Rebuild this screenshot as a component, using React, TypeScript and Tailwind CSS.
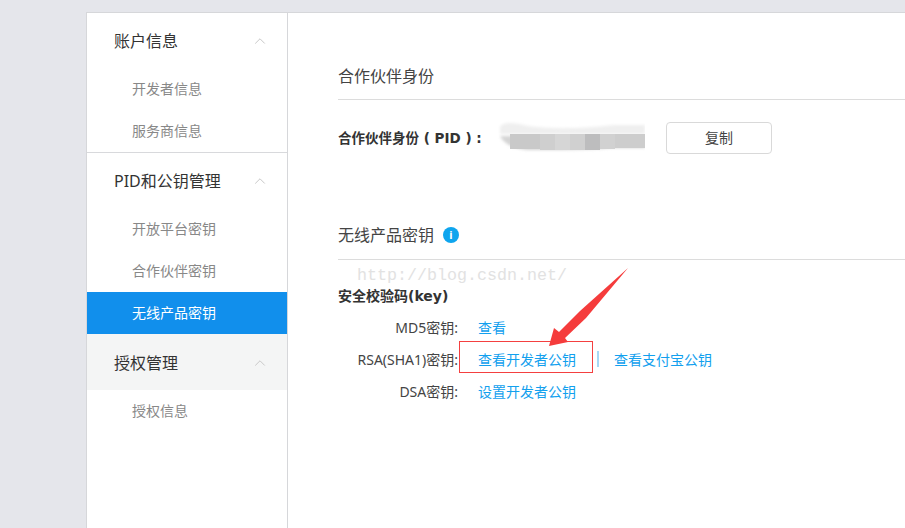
import { ChevronUp } from "lucide-react"

const groups = [
  { title: "账户信息", items: ["开发者信息", "服务商信息"] },
  { title: "PID和公钥管理", items: ["开放平台密钥", "合作伙伴密钥", "无线产品密钥"] },
  { title: "授权管理", items: ["授权信息"] },
]

function Sidebar() {
  return (
    <aside className="w-[202px] shrink-0 border-x border-[#d6d7da] bg-white">
      {groups.map((group, i) => (
        <div key={group.title} className={i === 0 ? "border-b border-[#d8d9dc]" : ""}>
          <div
            className={`flex items-center justify-between pl-[27px] pr-[18px] text-[16px] text-[#333] ${i === 2 ? "h-[56px] bg-[#f4f5f5] pt-[2px]" : "h-[55px]"}`}
          >
            <span>{group.title}</span>
            <ChevronUp className="h-[18px] w-[18px] text-[#c8c8c8]" strokeWidth={1.33} />
          </div>
          {group.items.map((item) => (
            <div
              key={item}
              className={`flex h-[42px] items-center pb-[2px] pl-[45px] text-[14px] ${item === "无线产品密钥" ? "bg-[#118fec] text-white" : "text-[#888]"}`}
            >
              {item}
            </div>
          ))}
        </div>
      ))}
    </aside>
  )
}

function Blurred() {
  return (
    <svg width="147" height="36" viewBox="0 0 147 36" className="shrink-0">
      <defs>
        <filter id="soft" x="-10%" y="-30%" width="120%" height="160%">
          <feGaussianBlur stdDeviation="1.5" />
        </filter>
      </defs>
      <path d="M2 7C6 1 16 3 30 6C60 10 90 8 116 5H147V14H2Z" fill="#efefef" filter="url(#soft)" />
      <path d="M2 16H147V28H112C90 30 60 30 30 30C16 29 6 24 2 16Z" fill="#d4d4d4" filter="url(#soft)" />
      <rect x="12" y="14" width="30" height="15" fill="#c9c9c9" />
      <rect x="42" y="14" width="15" height="16" fill="#cfcfcf" />
      <rect x="57" y="14" width="15" height="16" fill="#d6d6d6" />
      <rect x="72" y="14" width="15" height="16" fill="#d0d0d0" />
      <rect x="87" y="14" width="15" height="16" fill="#bdbdbe" />
      <rect x="102" y="14" width="15" height="15" fill="#d1d1d1" />
      <rect x="117" y="14" width="30" height="14" fill="#cdcdcd" />
    </svg>
  )
}

function KeyRow({ label, children }: { label: string; children: React.ReactNode }) {
  return (
    <div className="flex h-[32px] items-center">
      <div className="w-[120px] shrink-0 text-right text-[14px] text-[#444]">{label}</div>
      {children}
    </div>
  )
}

export default function App() {
  return (
    <div
      className="relative flex h-[528px] w-[905px] overflow-hidden bg-[#e5e6eb] pl-[86px] pt-[12px]"
      style={{ fontFamily: '"Noto Sans", "Noto Sans CJK SC", sans-serif' }}
    >
      <div className="flex min-w-0 flex-1 border-t border-[#d6d7da]">
        <Sidebar />
        <main className="flex-1 bg-white pl-[50px]">
          <h2 className="flex h-[87px] items-end border-b border-[#dcdcdc] pb-[11px] text-[16px] leading-[24px] text-[#444]">
            合作伙伴身份
          </h2>
          <div className="mt-[21px] flex h-[33px] items-center">
            <span className="w-[160px] shrink-0 whitespace-pre pt-[2px] font-['DejaVu_Sans','Noto_Sans_CJK_SC',sans-serif] text-[13.5px] font-bold text-[#333]">
              合作伙伴身份 ( PID ) :
            </span>
            <Blurred />
            <button className="ml-[21px] h-[32px] w-[106px] rounded-[4px] border border-[#d9d9d9] bg-white text-[14px] text-[#444]">
              复制
            </button>
          </div>
          <div className="mt-[53px] flex h-[53px] items-center gap-[9px] border-b border-[#dcdcdc] pt-[4px] text-[16px] text-[#444]">
            <span>无线产品密钥</span>
            <span className="flex h-[16px] w-[16px] items-center justify-center rounded-full bg-[#0ea5ee] text-[11px] font-bold text-white">
              i
            </span>
          </div>
          <div className="mt-[26px] h-[21px] font-['DejaVu_Sans','Noto_Sans_CJK_SC',sans-serif] text-[14px] font-bold leading-[21px] text-[#333]">
            安全校验码(key)
          </div>
          <div className="mt-[4px]">
            <KeyRow label="MD5密钥:">
              <a className="ml-[20px] text-[14px] text-[#12a0ee]">查看</a>
            </KeyRow>
            <KeyRow label="RSA(SHA1)密钥:">
              <a className="mb-[4px] ml-[1px] flex h-[32px] w-[134px] items-center border border-[#f44040] pl-[18px] pt-[4px] text-[14px] text-[#12a0ee]">
                查看开发者公钥
              </a>
              <span className="ml-[4px] h-[16px] w-[2px] bg-[#a8d8f5]" />
              <a className="ml-[15px] text-[14px] text-[#12a0ee]">查看支付宝公钥</a>
            </KeyRow>
            <KeyRow label="DSA密钥:">
              <a className="ml-[20px] text-[14px] text-[#12a0ee]">设置开发者公钥</a>
            </KeyRow>
          </div>
        </main>
      </div>
      {/* watermark */}
      <span
        className="absolute left-[357px] top-[265px] text-[16.67px] leading-[22px] text-[#e2e2e2]"
        style={{ fontFamily: '"Liberation Mono", monospace' }}
      >
        http://blog.csdn.net/
      </span>
      {/* arrow */}
      <svg className="absolute left-[540px] top-[260px]" width="95" height="95" viewBox="0 0 95 95">
        <path d="M88 8L40 51L19 72L14 68L9 86L28 82L25 78L46 58Z" fill="#f53c3c" />
      </svg>
    </div>
  )
}
